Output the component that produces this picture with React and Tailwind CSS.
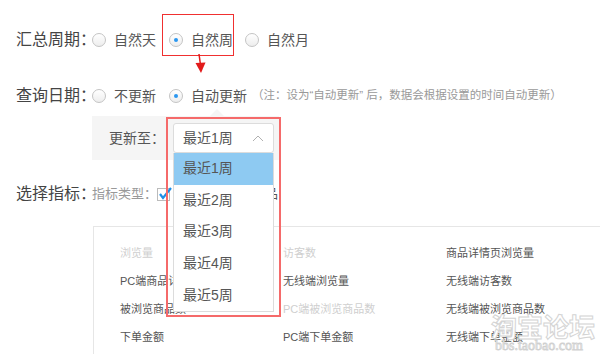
import React from "react";

const font = { fontFamily: '"Liberation Sans","Noto Sans CJK SC",sans-serif' };

function Radio({ on }) {
  return (
    <span className="w-[14px] h-[14px] rounded-full border border-[#c4c4c4] bg-gradient-to-b from-white to-[#ededed] flex items-center justify-center shrink-0">
      {on && <span className="w-[4px] h-[4px] rounded-full bg-[#2a97f0]" />}
    </span>
  );
}

function Opt({ on, label, mr = "mr-[13px]" }) {
  return (
    <span className={`flex items-center ${mr}`}>
      <Radio on={on} />
      <span className="ml-[8px] text-[14px] text-[#555]">{label}</span>
    </span>
  );
}

const grid = [
  ["浏览量", true], ["访客数", true], ["商品详情页浏览量", false],
  ["PC端商品详情页浏览量", false], ["无线端浏览量", false], ["无线端访客数", false],
  ["被浏览商品数", false], ["PC端被浏览商品数", true], ["无线端被浏览商品数", false],
  ["下单金额", false], ["PC端下单金额", false], ["无线端下单金额", false],
];

export default function App() {
  return (
    <div className="relative w-[600px] h-[354px] overflow-hidden bg-white" style={font}>
      <div className="flex flex-col">
        {/* Row 1 */}
        <div className="mt-[26px] h-[28px] flex items-center pl-[16px]">
          <span className="w-[76px] whitespace-nowrap text-[16px] text-[#444]">汇总周期：</span>
          <Opt label="自然天" />
          <Opt on label="自然周" mr="mr-[12px]" />
          <Opt label="自然月" />
        </div>
        {/* Row 2 */}
        <div className="mt-[28px] h-[28px] flex items-center pl-[16px]">
          <span className="w-[76px] whitespace-nowrap text-[16px] text-[#444]">查询日期：</span>
          <Opt label="不更新" />
          <Opt on label="自动更新" mr="mr-[5px]" />
          <span className="text-[11.5px] text-[#999] whitespace-nowrap">（注：设为“自动更新” 后，数据会根据设置的时间自动更新）</span>
        </div>
        {/* Update box */}
        <div className="relative mt-[6px] ml-[92px] w-[187px] h-[44px] bg-[#f5f5f5] flex items-center pl-[17px]">
          <span className="absolute left-[118px] -top-[7px] w-0 h-0 border-l-[7px] border-r-[7px] border-b-[7px] border-l-transparent border-r-transparent border-b-[#f5f5f5]" />
          <span className="w-[64px] whitespace-nowrap text-[14px] text-[#555]">更新至：</span>
          <div className="relative w-[101px] h-[30px] border border-[#dcdcdc] rounded-[3px] bg-white flex items-center justify-between pl-[9px] pr-[9px]">
            <span className="text-[14px] text-[#555]">最近1周</span>
            <svg width="12" height="7" viewBox="0 0 12 7">
              <polyline points="1,6 6,1 11,6" fill="none" stroke="#b0b0b0" strokeWidth="1" />
            </svg>
            <div className="absolute left-[-1px] top-[29px] w-[101px] border border-[#dcdcdc] border-t-0 bg-white z-10">
              {["最近1周", "最近2周", "最近3周", "最近4周", "最近5周"].map((t, i) => (
                <div
                  key={t}
                  className={`h-[31.6px] flex items-center pl-[9px] text-[14px] text-[#555] ${i === 0 ? "bg-[#8ecaf2]" : ""}`}
                >
                  {t}
                </div>
              ))}
            </div>
          </div>
        </div>
        {/* Row 3 */}
        <div className="mt-[20px] h-[28px] flex items-center pl-[16px]">
          <span className="w-[76px] whitespace-nowrap text-[16px] text-[#444]">选择指标：</span>
          <span className="w-[65px] whitespace-nowrap text-[13px] text-[#999]">指标类型：</span>
          <span className="relative w-[13px] h-[13px] border border-[#bbb] bg-white shrink-0">
            <svg className="absolute -left-[1px] -top-[3px]" width="16" height="16" viewBox="0 0 16 16">
              <polyline points="3,8 6,12 14,2" fill="none" stroke="#1e8fe6" strokeWidth="2.2" />
            </svg>
          </span>
          <span className="ml-[4px] whitespace-nowrap text-[13px] text-[#555]">全部流量指标商品</span>
        </div>
        {/* Metrics box */}
        <div className="mt-[18px] ml-[93px] border-t border-l border-[#e6e6e6] pt-[12px] pl-[26px] h-[200px]">
          <div className="grid grid-cols-[163px_163px_163px]">
            {grid.map(([t, dis]) => (
              <div key={t} className={`h-[28px] leading-[28px] whitespace-nowrap text-[11px] ${dis ? "text-[#cfcfcf]" : "text-[#555]"}`}>
                {t}
              </div>
            ))}
          </div>
        </div>
      </div>

      {/* Red highlight boxes */}
      <div className="absolute left-[162px] top-[14px] w-[72px] h-[42px] border-[1.5px] border-[#f03030] pointer-events-none" />
      <div className="absolute left-[166px] top-[117px] w-[115px] h-[200px] border-2 border-[#f56a6a] pointer-events-none z-20" />
      {/* Red arrow */}
      <svg className="absolute left-[190px] top-[52px]" width="20" height="24" viewBox="0 0 20 24">
        <line x1="9" y1="2" x2="10.5" y2="13" stroke="#e21b1b" strokeWidth="1.5" />
        <polygon points="5.5,11 15.5,10.5 11,21" fill="#e21b1b" />
      </svg>

      {/* Watermark */}
      <div className="absolute left-[491px] top-[313px] w-[109px] flex flex-col pointer-events-none z-30">
        <span className="text-[26px] font-bold leading-[26px] whitespace-nowrap text-white [-webkit-text-stroke:1px_#d4d4d4]" style={{ fontFamily: '"Noto Sans CJK SC",sans-serif' }}>
          淘宝论坛
        </span>
        <span className="ml-[4px] text-[14px] leading-[13px] whitespace-nowrap text-white [-webkit-text-stroke:0.8px_#d0d0d0]" style={{ fontFamily: '"Liberation Serif",serif' }}>
          bbs.taobao.com
        </span>
      </div>
    </div>
  );
}
